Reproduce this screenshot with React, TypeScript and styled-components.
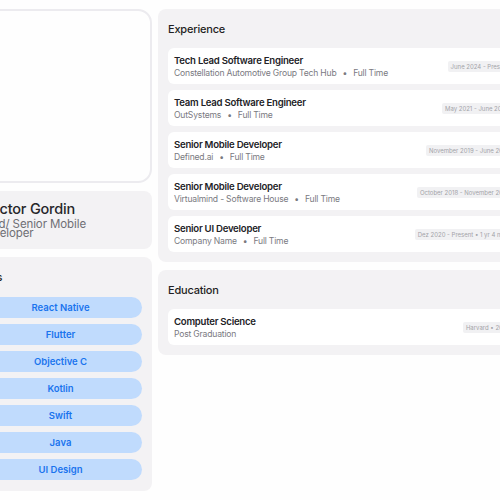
import React from "react";
import styled, { createGlobalStyle } from "styled-components";

const GlobalStyle = createGlobalStyle`
  html, body {
    margin: 0;
    padding: 0;
    overflow: hidden;
    background: #fefefe;
    font-family: Inter, "Liberation Sans", Arial, sans-serif;
    -webkit-font-smoothing: antialiased;
  }
`;

const Page = styled.div`
  display: grid;
  grid-template-columns: 183px 370px;
  column-gap: 6px;
  align-items: start;
  margin-left: -31px;
  padding-top: 9px;
  width: 559px;
`;

const Column = styled.div`
  display: flex;
  flex-direction: column;
  gap: 8px;
`;

const PhotoFrame = styled.div`
  height: 170px;
  border: 2px solid #ecebef;
  border-radius: 14px;
  background: #fefefe;
`;

const Card = styled.section`
  background: #f3f2f4;
  border-radius: 8px;
  padding: 12px 10px 10px;
`;

const ProfileCard = styled(Card)`
  height: 58px;
  box-sizing: border-box;
  padding: 9px 10px 0 17px;
`;

const Name = styled.h1`
  margin: 0;
  font-size: 14.5px;
  line-height: 17px;
  font-weight: 500;
  color: #26262a;
  letter-spacing: -0.2px;
`;

const Role = styled.p`
  margin: 3px 0 0 -7px;
  max-width: 130px;
  font-size: 11.5px;
  line-height: 8.5px;
  color: #6f6f74;
  letter-spacing: -0.1px;
`;

const CardTitle = styled.h2`
  margin: 0 0 11px;
  font-size: 11px;
  line-height: 16px;
  font-weight: 500;
  color: #1f1f23;
  letter-spacing: -0.2px;
`;

const SkillsCard = styled(Card)`
  padding-bottom: 11px;
`;

const SkillsTitle = styled.h3`
  margin: 0 0 0 -4px;
  font-size: 11px;
  line-height: 16px;
  font-weight: 500;
  color: #1f1f23;
`;

const SkillList = styled.ul`
  list-style: none;
  margin: 12px 0 0;
  padding: 0;
  display: flex;
  flex-direction: column;
  gap: 6px;
`;

const SkillPill = styled.li`
  height: 21px;
  border-radius: 11px;
  background: #c0dbfd;
  color: #1a74ee;
  font-size: 9.5px;
  font-weight: 600;
  display: flex;
  align-items: center;
  justify-content: center;
`;

const EntryList = styled.div`
  display: flex;
  flex-direction: column;
  gap: 6px;
`;

const Entry = styled.div`
  height: 36px;
  box-sizing: border-box;
  padding: 0 6px;
  background: #ffffff;
  border-radius: 6px;
  display: flex;
  align-items: center;
  justify-content: space-between;
`;

const EntryText = styled.div`
  display: flex;
  flex-direction: column;
`;

const EntryTitle = styled.div`
  font-size: 9.6px;
  line-height: 13px;
  font-weight: 600;
  color: #222226;
  letter-spacing: -0.25px;
`;

const EntryMeta = styled.div`
  font-size: 8.6px;
  line-height: 12px;
  color: #7a7a7f;
  letter-spacing: -0.2px;
`;

const Dot = styled.span`
  margin: 0 6px;
`;

const DateTag = styled.span`
  background: #f1f1f3;
  color: #a3a3a8;
  font-size: 6px;
  line-height: 7px;
  padding: 2px 3px;
  border-radius: 2px;
  white-space: nowrap;
`;

type Job = {
  title: string;
  org: string;
  kind?: string;
  period: string;
};

const jobs: Job[] = [
  {
    title: "Tech Lead Software Engineer",
    org: "Constellation Automotive Group Tech Hub",
    kind: "Full Time",
    period: "June 2024 - Present",
  },
  {
    title: "Team Lead Software Engineer",
    org: "OutSystems",
    kind: "Full Time",
    period: "May 2021 - June 2024",
  },
  {
    title: "Senior Mobile Developer",
    org: "Defined.ai",
    kind: "Full Time",
    period: "November 2019 - June 2021",
  },
  {
    title: "Senior Mobile Developer",
    org: "Virtualmind - Software House",
    kind: "Full Time",
    period: "October 2018 - November 2019",
  },
  {
    title: "Senior UI Developer",
    org: "Company Name",
    kind: "Full Time",
    period: "Dez 2020 - Present \u2022 1 yr 4 mos",
  },
];

const studies: Job[] = [
  {
    title: "Computer Science",
    org: "Post Graduation",
    period: "Harvard \u2022 2016",
  },
];

const skills = [
  "React Native",
  "Flutter",
  "Objective C",
  "Kotlin",
  "Swift",
  "Java",
  "UI Design",
];

function TimelineEntry({ title, org, kind, period }: Job) {
  return (
    <Entry>
      <EntryText>
        <EntryTitle>{title}</EntryTitle>
        <EntryMeta>
          {org}
          {kind && (
            <>
              <Dot>•</Dot>
              {kind}
            </>
          )}
        </EntryMeta>
      </EntryText>
      <DateTag>{period}</DateTag>
    </Entry>
  );
}

export default function App() {
  return (
    <>
      <GlobalStyle />
      <Page>
        <Column>
          <PhotoFrame />
          <ProfileCard>
            <Name>Victor Gordin</Name>
            <Role>Lead/ Senior Mobile Developer</Role>
          </ProfileCard>
          <SkillsCard>
            <SkillsTitle>Skills</SkillsTitle>
            <SkillList>
              {skills.map((s) => (
                <SkillPill key={s}>{s}</SkillPill>
              ))}
            </SkillList>
          </SkillsCard>
        </Column>
        <Column>
          <Card>
            <CardTitle>Experience</CardTitle>
            <EntryList>
              {jobs.map((j, i) => (
                <TimelineEntry key={i} {...j} />
              ))}
            </EntryList>
          </Card>
          <Card>
            <CardTitle>Education</CardTitle>
            <EntryList>
              {studies.map((s, i) => (
                <TimelineEntry key={i} {...s} />
              ))}
            </EntryList>
          </Card>
        </Column>
      </Page>
    </>
  );
}
